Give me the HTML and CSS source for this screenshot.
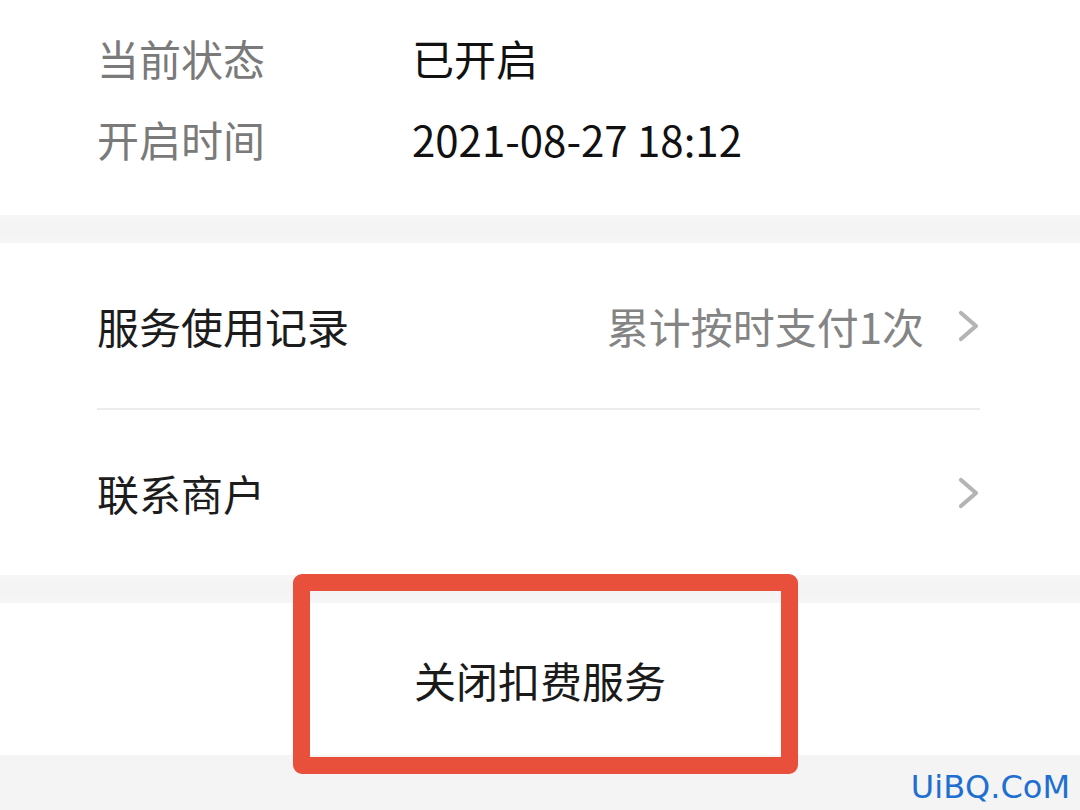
FILE: index.html
```html
<!DOCTYPE html>
<html lang="zh-CN">
<head>
<meta charset="utf-8">
<link rel="stylesheet" href="styles.css">
</head>
<body>
<div class="page">
  <section class="card info">
    <div class="info-row"><span class="label">当前状态</span><span class="value">已开启</span></div>
    <div class="info-row"><span class="label">开启时间</span><span class="value">2021-08-27 18:12</span></div>
  </section>
  <div class="gap"></div>
  <section class="card list">
    <div class="list-row">
      <span class="title">服务使用记录</span>
      <span class="extra">累计按时支付1次</span>
      <svg class="chev" width="26" height="32" viewBox="0 0 26 32"><path d="M5 3 L20 16 L5 29" fill="none" stroke="#b4b4b4" stroke-width="4.2" stroke-linecap="round" stroke-linejoin="round"/></svg>
    </div>
    <div class="divider"></div>
    <div class="list-row">
      <span class="title">联系商户</span>
      <svg class="chev" width="26" height="32" viewBox="0 0 26 32"><path d="M5 3 L20 16 L5 29" fill="none" stroke="#b4b4b4" stroke-width="4.2" stroke-linecap="round" stroke-linejoin="round"/></svg>
    </div>
  </section>
  <div class="gap"></div>
  <section class="card action">
    <span class="action-text">关闭扣费服务</span>
  </section>
  <div class="footer"></div>
  <div class="highlight"></div>
  <div class="watermark">UiBQ.CoM</div>
</div>
</body>
</html>
```
FILE: styles.css
```css
html, body {
  margin: 0;
  padding: 0;
  background: #f5f5f5;
}
body {
  font-family: "Noto Sans CJK SC", "Noto Sans", sans-serif;
}
.page {
  position: relative;
  width: 1080px;
  height: 810px;
  overflow: hidden;
  display: flex;
  flex-direction: column;
}
.card {
  background: #ffffff;
}
.info {
  height: 215px;
  box-sizing: border-box;
  padding: 17px 0 0 97px;
}
.info-row {
  display: flex;
  align-items: center;
  height: 81px;
  font-size: 42px;
}
.label {
  width: 315px;
  color: #7a7a7a;
}
.value {
  color: #111111;
}
.gap {
  height: 28px;
  background: linear-gradient(#f7f7f7, #f3f3f3 50%, #f6f6f6);
}
.list {
  padding: 0 100px 0 97px;
}
.list-row {
  display: flex;
  align-items: center;
  height: 165px;
  font-size: 42px;
}
.title {
  flex: 1;
  color: #1c1c1c;
}
.extra {
  color: #848484;
  margin-right: 32px;
}
.chev {
  display: block;
  margin-right: -2px;
}
.divider {
  height: 2px;
  background: #ececec;
}
.action {
  height: 152px;
  display: flex;
  align-items: center;
  justify-content: center;
}
.action-text {
  font-size: 42px;
  color: #1a1a1a;
}
.footer {
  flex: 1;
  background: #f4f4f4;
}
.highlight {
  position: absolute;
  left: 293px;
  top: 574px;
  width: 505px;
  height: 200px;
  box-sizing: border-box;
  border: 17px solid #e8503b;
  border-radius: 9px;
}
.watermark {
  position: absolute;
  right: 10px;
  bottom: 4px;
  font-family: "DejaVu Sans", sans-serif;
  font-size: 32px;
  color: #1f6fd0;
}
```
